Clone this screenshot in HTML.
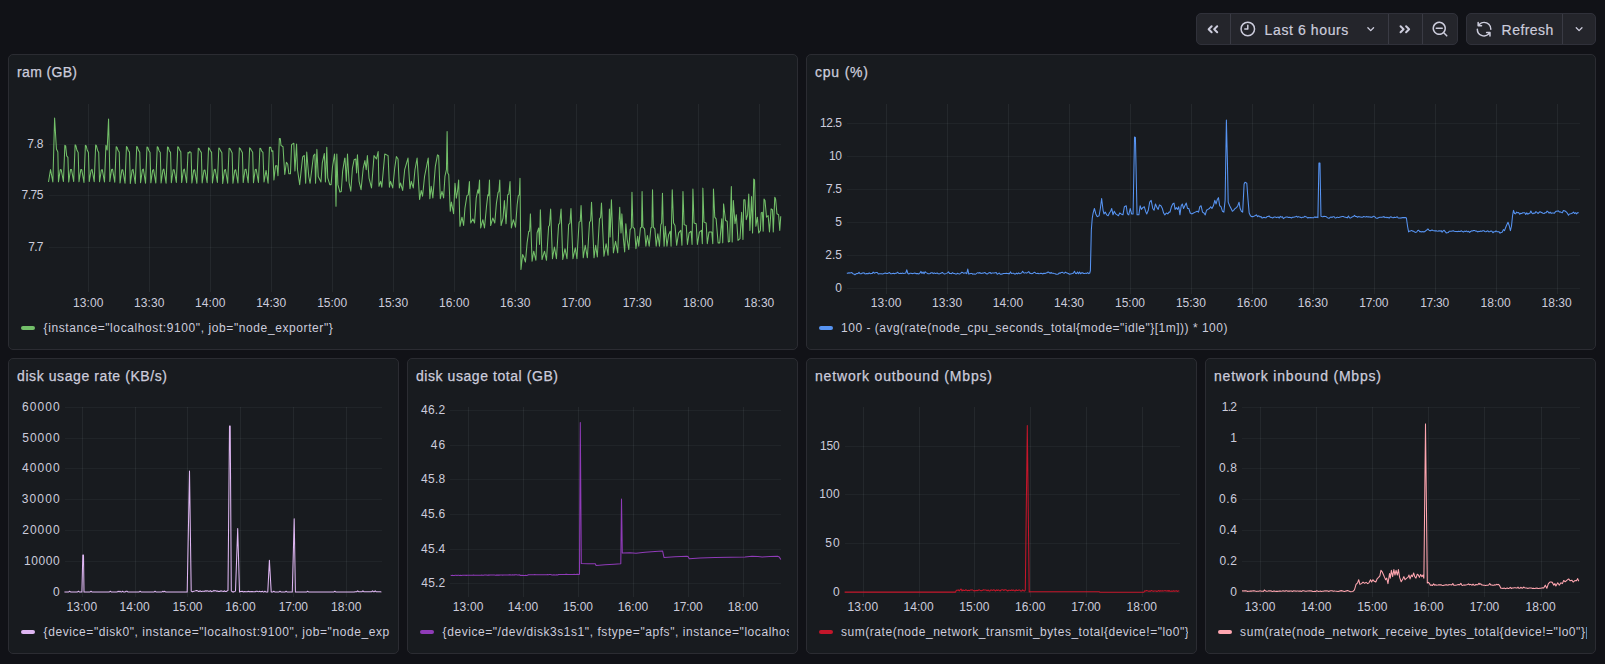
<!DOCTYPE html>
<html><head><meta charset="utf-8"><title>Dashboard</title>
<style>
html,body{margin:0;padding:0;background:#111217;}
body{width:1605px;height:664px;overflow:hidden;position:relative;font-family:"Liberation Sans",sans-serif;color:#ccccdc;}
.panel{position:absolute;box-sizing:border-box;background:#181b1f;border:1px solid #2b2c32;border-radius:5px;overflow:hidden;}
.panel svg{position:absolute;left:-1px;top:-1px;display:block;}
svg text{font-family:"Liberation Sans",sans-serif;}
.ttl{stroke:#ccccdc;stroke-width:0.25px;}
.grp{position:absolute;top:13px;height:32px;box-sizing:border-box;background:#24252b;border:1px solid #30313a;border-radius:5px;overflow:hidden;}
.grp .btn{position:absolute;top:0;height:30px;box-sizing:border-box;}
.grp .sep{border-left:1px solid #34373d;}
.grp svg{position:absolute;left:0;top:0;}
.lbl{stroke:#ccccdc;stroke-width:0.2px;}

</style></head><body>
<div class="grp" style="left:1196px;width:262px">
<svg width="262" height="32" viewBox="1196 13 262 32" style="left:-1px;top:-1px">
<path d="M1230.5 13V45M1388.5 13V45M1422.5 13V45" stroke="#3a3b44" stroke-width="1" fill="none"/>
<g fill="#ccccdc">
<path transform="translate(1200.9,17.2) scale(1)" d="M11.46,8.29a1,1,0,0,0-1.42,0l-3,3a1,1,0,0,0,0,1.42l3,3a1,1,0,0,0,1.42,0,1,1,0,0,0,0-1.42L9.16,12l2.3-2.29A1,1,0,0,0,11.46,8.29ZM14.66,12,17,9.71a1,1,0,0,0-1.42-1.42l-3,3a1,1,0,0,0,0,1.42l3,3a1,1,0,0,0,1.42,0,1,1,0,0,0,0-1.42Z"/>
<path transform="translate(1238.8,19.9) scale(0.75)" d="M12,2A10,10,0,1,0,22,12,10.01114,10.01114,0,0,0,12,2Zm0,18a8,8,0,1,1,8-8A8.00917,8.00917,0,0,1,12,20ZM12,6a.99974.99974,0,0,0-1,1v4H8a1,1,0,0,0,0,2h4a.99974.99974,0,0,0,1-1V7A.99974.99974,0,0,0,12,6Z"/>
<path transform="translate(1362.7,21.2) scale(0.6667)" d="M17,9.17a1,1,0,0,0-1.41,0L12,12.71,8.46,9.17a1,1,0,0,0-1.41,0,1,1,0,0,0,0,1.42l4.24,4.24a1,1,0,0,0,1.42,0L17,10.59A1,1,0,0,0,17,9.17Z"/>
<path transform="translate(1416.85,17.2) scale(-1,1)" d="M11.46,8.29a1,1,0,0,0-1.42,0l-3,3a1,1,0,0,0,0,1.42l3,3a1,1,0,0,0,1.42,0,1,1,0,0,0,0-1.42L9.16,12l2.3-2.29A1,1,0,0,0,11.46,8.29ZM14.66,12,17,9.71a1,1,0,0,0-1.42-1.42l-3,3a1,1,0,0,0,0,1.42l3,3a1,1,0,0,0,1.42,0,1,1,0,0,0,0-1.42Z"/>
<path transform="translate(1431.0,20.1) scale(0.75)" d="M21.71,20.29,18,16.61A9,9,0,1,0,16.61,18l3.68,3.68a1,1,0,0,0,1.42,0A1,1,0,0,0,21.71,20.29ZM11,18a7,7,0,1,1,7-7A7,7,0,0,1,11,18ZM15,10H7a1,1,0,0,0,0,2h8a1,1,0,0,0,0-2Z"/>
</g>
<text class="lbl" x="1264.6" y="34.8" font-size="14" fill="#ccccdc" textLength="83.7" lengthAdjust="spacing">Last 6 hours</text>
</svg></div>
<div class="grp" style="left:1466px;width:130px">
<svg width="130" height="32" viewBox="1466 13 130 32" style="left:-1px;top:-1px">
<path d="M1562.5 13V45" stroke="#3a3b44" stroke-width="1" fill="none"/>
<g fill="#ccccdc">
<path transform="translate(1475.07,20.14) scale(0.75)" d="M19.91,15.51H15.38a1,1,0,0,0,0,2h2.4A8,8,0,0,1,4,12a1,1,0,0,0-2,0,10,10,0,0,0,16.88,7.23V21a1,1,0,0,0,2,0V16.5A1,1,0,0,0,19.91,15.51ZM12,2A10,10,0,0,0,5.12,4.77V3a1,1,0,0,0-2,0V7.5a1,1,0,0,0,1,1h4.5a1,1,0,0,0,0-2H6.22A8,8,0,0,1,20,12a1,1,0,0,0,2,0A10,10,0,0,0,12,2Z"/>
<path transform="translate(1571.1,21.2) scale(0.6667)" d="M17,9.17a1,1,0,0,0-1.41,0L12,12.71,8.46,9.17a1,1,0,0,0-1.41,0,1,1,0,0,0,0,1.42l4.24,4.24a1,1,0,0,0,1.42,0L17,10.59A1,1,0,0,0,17,9.17Z"/>
</g>
<text class="lbl" x="1501.6" y="34.8" font-size="14" fill="#ccccdc" textLength="51.7" lengthAdjust="spacing">Refresh</text>
</svg></div>

<div class="panel" style="left:8px;top:54px;width:790px;height:296px">
<svg width="790" height="296" viewBox="8 54 790 296">
<path d="M88.5 103.5V291.5M149.5 103.5V291.5M210.5 103.5V291.5M271.5 103.5V291.5M332.5 103.5V291.5M393.5 103.5V291.5M454.5 103.5V291.5M515.5 103.5V291.5M576.5 103.5V291.5M637.5 103.5V291.5M698.5 103.5V291.5M759.5 103.5V291.5" stroke="rgba(240,250,255,0.058)" stroke-width="1" fill="none" shape-rendering="crispEdges"/>
<path d="M48.5 144.5H781.0M48.5 195.5H781.0M48.5 247.5H781.0" stroke="rgba(240,250,255,0.044)" stroke-width="1" fill="none" shape-rendering="crispEdges"/>
<text x="43.5" y="147.9" text-anchor="end" font-size="12" fill="#ccccdc" textLength="16.3" lengthAdjust="spacing">7.8</text>
<text x="43.5" y="199.0" text-anchor="end" font-size="12" fill="#ccccdc" textLength="22.1" lengthAdjust="spacing">7.75</text>
<text x="43.5" y="250.9" text-anchor="end" font-size="12" fill="#ccccdc" textLength="15.2" lengthAdjust="spacing">7.7</text>
<text x="88.2" y="306.7" text-anchor="middle" font-size="12" fill="#ccccdc" textLength="30.6" lengthAdjust="spacing">13:00</text>
<text x="149.2" y="306.7" text-anchor="middle" font-size="12" fill="#ccccdc" textLength="30.4" lengthAdjust="spacing">13:30</text>
<text x="210.2" y="306.7" text-anchor="middle" font-size="12" fill="#ccccdc" textLength="30.3" lengthAdjust="spacing">14:00</text>
<text x="271.2" y="306.7" text-anchor="middle" font-size="12" fill="#ccccdc" textLength="30.1" lengthAdjust="spacing">14:30</text>
<text x="332.2" y="306.7" text-anchor="middle" font-size="12" fill="#ccccdc" textLength="30.1" lengthAdjust="spacing">15:00</text>
<text x="393.2" y="306.7" text-anchor="middle" font-size="12" fill="#ccccdc" textLength="29.9" lengthAdjust="spacing">15:30</text>
<text x="454.2" y="306.7" text-anchor="middle" font-size="12" fill="#ccccdc" textLength="30.5" lengthAdjust="spacing">16:00</text>
<text x="515.2" y="306.7" text-anchor="middle" font-size="12" fill="#ccccdc" textLength="30.3" lengthAdjust="spacing">16:30</text>
<text x="576.2" y="306.7" text-anchor="middle" font-size="12" fill="#ccccdc" textLength="29.3" lengthAdjust="spacing">17:00</text>
<text x="637.2" y="306.7" text-anchor="middle" font-size="12" fill="#ccccdc" textLength="29.1" lengthAdjust="spacing">17:30</text>
<text x="698.2" y="306.7" text-anchor="middle" font-size="12" fill="#ccccdc" textLength="30.4" lengthAdjust="spacing">18:00</text>
<text x="759.2" y="306.7" text-anchor="middle" font-size="12" fill="#ccccdc" textLength="30.2" lengthAdjust="spacing">18:30</text>
<text x="17.0" y="77.0" text-anchor="start" font-size="14" fill="#ccccdc" textLength="60.0" lengthAdjust="spacing" class="ttl">ram (GB)</text>
<rect x="21" y="326.0" width="14" height="4" rx="2" fill="#73BF69"/>
<text x="43.6" y="332.2" text-anchor="start" font-size="12" fill="#ccccdc" textLength="289.2" lengthAdjust="spacing">{instance=&quot;localhost:9100&quot;, job=&quot;node_exporter&quot;}</text>
<path d="M48.50 182.00L50.53 169.50L52.87 182.00L54.60 118.00L56.43 149.00L57.85 152.00L58.46 181.82L60.29 169.55L61.20 169.65L63.44 181.57L64.86 145.34L65.68 145.90L66.69 155.97L67.91 157.36L68.72 182.01L70.55 169.44L71.47 169.43L73.70 181.57L75.13 144.89L75.94 145.90L76.96 150.32L78.18 152.43L78.99 181.62L80.82 169.62L81.73 169.63L83.97 182.45L85.39 145.38L86.21 145.90L87.22 150.30L88.44 152.58L89.25 181.55L91.08 170.26L92.00 169.29L94.23 181.64L95.66 144.92L96.47 145.90L97.49 150.21L98.71 152.42L99.52 181.68L101.35 169.98L102.26 169.64L104.50 181.87L105.92 145.35L107.14 150.00L108.56 119.00L109.78 172.00L109.78 181.56L111.61 169.46L112.52 169.21L114.76 182.18L116.18 146.73L117.00 147.40L118.01 150.21L119.23 152.19L120.04 182.95L121.87 169.70L122.79 169.79L125.03 183.20L126.45 146.54L127.26 147.40L128.28 150.47L129.50 152.13L130.31 183.38L132.14 170.13L133.05 169.29L135.29 183.48L136.71 146.42L137.53 147.40L138.54 150.32L139.76 152.36L140.57 182.65L142.40 169.89L143.32 169.04L145.55 183.17L146.98 147.06L147.79 147.40L148.81 150.47L150.03 152.48L150.84 182.81L152.67 170.10L153.58 169.59L155.82 183.08L157.24 146.76L158.05 147.40L159.07 150.74L160.29 152.54L161.10 182.97L162.93 170.06L163.85 169.06L166.08 183.20L167.50 146.95L168.32 147.40L169.33 150.89L170.55 152.42L171.36 182.78L173.19 169.79L174.11 169.67L176.35 182.52L177.77 146.76L178.58 147.40L179.60 150.07L180.82 151.72L181.63 182.56L183.46 170.17L184.37 169.13L186.61 182.75L188.03 152.39L188.85 153.10L189.86 151.67L191.08 152.58L191.89 182.95L193.72 169.95L194.64 169.88L196.87 183.32L198.30 148.36L199.11 148.60L200.13 150.78L201.35 152.62L202.16 182.86L203.99 170.28L204.90 169.96L207.14 182.65L208.56 147.68L209.37 148.60L210.39 150.73L211.61 152.43L212.42 182.98L214.25 169.99L215.17 169.26L217.40 182.50L218.83 147.92L219.64 148.60L220.66 150.87L221.88 152.77L222.68 183.45L224.51 170.09L225.43 169.52L227.67 183.12L229.09 148.18L229.90 148.60L230.92 150.55L232.14 153.10L232.95 183.28L234.78 170.27L235.69 169.80L237.93 182.89L239.35 147.90L240.17 148.60L241.18 150.60L242.40 152.83L243.21 182.56L245.04 169.47L245.96 169.21L248.19 182.66L249.62 147.84L250.43 148.60L251.45 150.55L252.67 152.20L253.48 182.65L255.31 169.50L256.22 169.36L258.46 182.53L259.88 148.37L260.70 148.60L261.71 151.11L262.93 152.35L264.03 181.93L266.07 170.41L268.10 183.28L269.45 147.36L270.81 147.36L271.76 151.43L272.84 150.75L273.93 179.89L275.55 165.66L276.91 165.66L277.99 175.83L279.35 138.55L280.30 138.55L280.98 145.33L283.01 146.69L284.77 174.47L286.40 162.27L287.75 164.31L288.84 173.79L290.46 173.79L291.55 144.65L293.85 143.30L294.94 171.08L296.56 143.98L297.51 169.73L299.68 184.64L302.66 156.85L304.29 155.50L305.64 183.28L306.73 152.11L308.76 176.50L310.12 183.28L313.50 155.50L314.86 154.14L315.54 183.28L316.89 149.40L318.25 176.50L319.60 179.22L320.96 181.93L322.31 162.95L324.35 153.46L325.43 181.93L326.79 147.36L327.74 177.86L329.77 184.64L331.12 184.64L332.48 167.02L334.51 154.14L335.19 164.31L336.00 206.32L336.82 154.14L337.90 184.64L339.93 192.09L341.29 191.41L342.65 171.08L344.68 158.21L345.00 158.12L346.33 181.33L347.49 153.98L349.14 182.99L350.80 191.27L352.46 168.07L354.12 159.78L355.77 158.95L356.60 173.04L357.43 154.81L359.09 181.33L361.08 189.62L363.23 168.07L364.89 160.61L366.22 169.73L367.38 155.64L369.03 178.01L371.52 187.96L374.01 155.64L376.49 158.95L378.15 151.49L378.98 186.30L380.64 181.33L381.80 187.13L384.78 153.98L388.10 155.64L389.42 187.13L390.58 181.33L392.74 187.96L394.73 168.07L396.38 156.47L398.04 158.95L399.37 187.96L400.53 182.99L402.68 190.45L404.67 169.73L407.99 158.12L409.98 188.79L411.30 181.33L413.29 187.96L414.95 169.73L417.10 158.12L419.59 199.56L421.25 190.45L422.57 196.25L424.56 176.36L426.22 168.07L428.21 158.12L429.87 198.73L431.19 186.30L432.85 197.90L435.34 166.41L437.49 154.81L438.65 155.64L440.31 198.73L441.97 191.27L443.62 197.90L444.95 176.36L446.44 169.73L447.11 131.60L447.77 173.04L448.76 174.70L450.25 211.17L451.41 202.05L453.57 213.65L455.00 183.23L456.33 198.15L457.49 191.52L458.65 179.92L459.97 226.33L461.96 217.21L463.62 225.50L464.95 208.10L466.93 195.66L468.26 194.84L469.42 181.58L470.75 223.01L472.90 218.87L474.56 223.01L476.22 198.15L477.87 189.86L478.54 193.18L479.53 179.92L480.69 227.99L482.85 219.70L484.50 227.99L486.49 206.44L487.82 194.84L488.65 195.66L489.48 179.92L490.64 225.50L492.79 218.04L494.78 223.01L496.44 203.12L498.10 192.35L498.93 191.52L499.75 179.92L501.08 225.50L503.07 218.04L504.39 200.64L506.05 223.84L507.71 194.84L508.87 194.01L510.03 181.58L511.36 227.99L513.35 219.70L515.50 227.16L517.16 204.78L518.32 195.66L519.31 194.84L519.98 178.26L520.97 269.43L522.63 254.51L523.79 256.99L525.45 261.97L527.10 242.90L528.76 231.30L529.59 231.30L530.42 213.90L532.08 261.14L533.73 251.19L535.89 260.31L537.05 232.96L538.71 227.99L539.54 244.56L540.36 209.75L542.02 259.48L544.51 251.19L546.50 260.31L548.65 226.33L549.48 225.50L550.64 208.93L552.46 258.65L554.45 247.05L556.44 258.65L558.60 224.67L559.76 223.01L561.08 208.93L562.74 259.48L565.00 248.71L566.99 258.65L568.65 224.67L569.97 223.01L570.97 208.43L572.96 258.65L575.28 247.88L576.93 258.65L579.09 222.19L580.25 221.36L581.08 205.61L583.23 257.82L585.22 245.39L587.38 257.82L589.53 222.19L590.69 220.53L591.52 202.29L594.01 257.82L595.66 245.39L597.32 256.99L599.48 218.87L600.64 217.21L601.47 203.12L603.95 256.17L606.11 243.73L608.10 255.34L609.42 208.93L610.09 237.10L611.41 199.81L613.40 252.85L615.56 241.25L617.71 252.85L619.70 207.27L621.03 232.96L621.85 213.90L623.35 237.93L624.67 252.02L625.83 223.84L627.16 239.59L628.82 249.54L630.14 229.64L631.30 227.99L631.97 192.35L632.96 227.16L634.62 228.82L635.94 248.71L637.60 236.27L638.76 246.22L640.42 227.99L641.58 227.16L642.08 191.52L642.90 227.16L644.56 228.82L645.89 246.22L647.38 235.45L649.20 246.22L650.86 227.99L651.86 227.16L652.52 189.86L653.35 227.16L654.84 228.82L656.17 246.22L657.82 233.79L659.48 246.22L660.81 224.67L661.64 223.01L662.46 193.18L663.29 227.99L664.12 246.22L665.28 226.33L666.94 246.22L668.60 234.62L670.25 231.30L671.08 246.22L672.24 189.86L673.57 223.01L675.00 225.45L676.66 245.34L678.65 232.90L680.80 230.42L681.96 245.34L682.96 191.47L684.12 224.62L686.27 225.45L687.43 244.51L689.09 232.90L691.08 231.25L692.07 244.51L692.90 188.98L694.06 222.96L696.22 223.79L697.38 244.51L699.37 232.08L701.52 230.42L702.35 243.68L702.85 188.15L704.01 222.13L706.16 222.96L707.32 243.68L708.98 232.08L711.80 232.08L712.79 243.68L713.46 188.98L714.78 217.16L716.11 218.82L718.10 242.85L719.75 242.85L721.74 218.82L722.74 242.85L723.57 203.90L725.56 220.47L727.21 221.30L728.37 242.02L729.70 241.19L731.36 186.49L732.19 242.02L733.35 200.58L735.00 223.79L736.33 214.67L737.99 240.36L739.98 238.71L741.63 212.19L742.96 239.54L743.79 199.75L744.95 199.75L746.27 219.64L747.60 214.67L748.76 193.95L749.92 230.42L751.58 196.44L752.57 232.90L753.73 179.03L754.56 179.86L755.89 226.27L757.38 217.16L758.71 232.90L760.36 230.42L761.19 213.01L762.35 212.19L763.18 231.25L764.01 198.93L765.00 200.58L766.50 217.16L768.15 215.50L769.48 232.08L771.14 208.87L772.46 209.70L773.29 232.08L774.78 197.27L775.61 198.93L776.94 213.84L778.60 214.67L779.76 230.42L780.75 216.33" stroke="#73BF69" stroke-width="1.05" fill="none" stroke-linejoin="round"/>
</svg></div>
<div class="panel" style="left:806px;top:54px;width:790px;height:296px">
<svg width="790" height="296" viewBox="806 54 790 296">
<path d="M886.5 103.5V293.5M947.5 103.5V293.5M1008.5 103.5V293.5M1069.5 103.5V293.5M1130.5 103.5V293.5M1191.5 103.5V293.5M1252.5 103.5V293.5M1313.5 103.5V293.5M1374.5 103.5V293.5M1435.5 103.5V293.5M1496.5 103.5V293.5M1557.5 103.5V293.5" stroke="rgba(240,250,255,0.058)" stroke-width="1" fill="none" shape-rendering="crispEdges"/>
<path d="M847.0 123.5H1579.5M847.0 156.5H1579.5M847.0 189.5H1579.5M847.0 222.5H1579.5M847.0 255.5H1579.5M847.0 288.5H1579.5" stroke="rgba(240,250,255,0.044)" stroke-width="1" fill="none" shape-rendering="crispEdges"/>
<text x="842.0" y="126.8" text-anchor="end" font-size="12" fill="#ccccdc" textLength="22.1" lengthAdjust="spacing">12.5</text>
<text x="842.0" y="159.8" text-anchor="end" font-size="12" fill="#ccccdc" textLength="12.9" lengthAdjust="spacing">10</text>
<text x="842.0" y="192.9" text-anchor="end" font-size="12" fill="#ccccdc" textLength="16.0" lengthAdjust="spacing">7.5</text>
<text x="842.0" y="225.9" text-anchor="end" font-size="12" fill="#ccccdc" textLength="6.9" lengthAdjust="spacing">5</text>
<text x="842.0" y="258.9" text-anchor="end" font-size="12" fill="#ccccdc" textLength="16.8" lengthAdjust="spacing">2.5</text>
<text x="842.0" y="291.9" text-anchor="end" font-size="12" fill="#ccccdc" textLength="7.6" lengthAdjust="spacing">0</text>
<text x="886.1" y="306.7" text-anchor="middle" font-size="12" fill="#ccccdc" textLength="30.6" lengthAdjust="spacing">13:00</text>
<text x="947.1" y="306.7" text-anchor="middle" font-size="12" fill="#ccccdc" textLength="30.4" lengthAdjust="spacing">13:30</text>
<text x="1008.0" y="306.7" text-anchor="middle" font-size="12" fill="#ccccdc" textLength="30.3" lengthAdjust="spacing">14:00</text>
<text x="1069.0" y="306.7" text-anchor="middle" font-size="12" fill="#ccccdc" textLength="30.1" lengthAdjust="spacing">14:30</text>
<text x="1130.0" y="306.7" text-anchor="middle" font-size="12" fill="#ccccdc" textLength="30.1" lengthAdjust="spacing">15:00</text>
<text x="1190.9" y="306.7" text-anchor="middle" font-size="12" fill="#ccccdc" textLength="29.9" lengthAdjust="spacing">15:30</text>
<text x="1251.9" y="306.7" text-anchor="middle" font-size="12" fill="#ccccdc" textLength="30.5" lengthAdjust="spacing">16:00</text>
<text x="1312.8" y="306.7" text-anchor="middle" font-size="12" fill="#ccccdc" textLength="30.3" lengthAdjust="spacing">16:30</text>
<text x="1373.8" y="306.7" text-anchor="middle" font-size="12" fill="#ccccdc" textLength="29.3" lengthAdjust="spacing">17:00</text>
<text x="1434.7" y="306.7" text-anchor="middle" font-size="12" fill="#ccccdc" textLength="29.1" lengthAdjust="spacing">17:30</text>
<text x="1495.6" y="306.7" text-anchor="middle" font-size="12" fill="#ccccdc" textLength="30.4" lengthAdjust="spacing">18:00</text>
<text x="1556.6" y="306.7" text-anchor="middle" font-size="12" fill="#ccccdc" textLength="30.2" lengthAdjust="spacing">18:30</text>
<text x="815.0" y="77.0" text-anchor="start" font-size="14" fill="#ccccdc" textLength="53.0" lengthAdjust="spacing" class="ttl">cpu (%)</text>
<rect x="819" y="326.0" width="14" height="4" rx="2" fill="#5794F2"/>
<text x="841.1" y="332.2" text-anchor="start" font-size="12" fill="#ccccdc" textLength="386.3" lengthAdjust="spacing">100 - (avg(rate(node_cpu_seconds_total{mode=&quot;idle&quot;}[1m])) * 100)</text>
<path d="M846.80 272.85L847.82 273.35L848.83 272.78L849.85 273.12L850.87 272.74L851.88 272.56L852.90 273.75L853.92 273.98L854.93 274.79L855.95 273.83L856.96 273.61L857.98 273.55L859.00 272.27L860.01 273.78L861.03 273.85L862.05 273.13L863.06 273.03L864.08 272.83L865.10 274.03L866.11 273.63L867.13 273.54L868.15 273.82L869.16 272.86L870.18 273.70L871.20 273.53L872.21 273.44L873.23 272.18L874.25 273.15L875.26 272.76L876.28 272.58L877.29 272.50L878.31 274.05L879.33 273.66L880.34 273.71L881.36 273.78L882.38 274.07L883.39 273.64L884.41 273.26L885.43 273.07L886.44 273.42L887.46 273.53L888.48 273.09L889.49 272.58L890.51 273.62L891.53 273.80L892.54 273.54L893.56 273.28L894.58 273.68L895.59 273.22L896.61 273.16L897.62 272.22L898.64 273.26L899.66 273.53L900.67 273.24L901.69 273.48L902.71 273.12L903.72 273.57L904.74 273.36L905.76 273.01L906.77 269.80L907.79 273.27L908.81 274.05L909.82 273.35L910.84 273.17L911.86 273.60L912.87 273.62L913.89 273.21L914.91 273.08L915.92 273.63L916.94 273.53L917.95 273.64L918.97 273.88L919.99 272.98L921.00 271.40L922.02 273.41L923.04 271.93L924.05 273.77L925.07 271.70L926.09 272.59L927.10 273.16L928.12 273.81L929.14 273.82L930.15 273.51L931.17 272.74L932.19 272.73L933.20 273.68L934.22 272.82L935.24 273.56L936.25 273.15L937.27 272.99L938.28 273.80L939.30 273.87L940.32 273.53L941.33 273.01L942.35 272.44L943.37 273.33L944.38 273.97L945.40 273.74L946.42 273.37L947.43 272.89L948.45 271.80L949.47 273.38L950.48 273.47L951.50 273.69L952.52 272.63L953.53 273.43L954.55 273.56L955.57 273.92L956.58 273.93L957.60 273.31L958.61 273.71L959.63 273.92L960.65 273.34L961.66 272.31L962.68 272.62L963.70 273.20L964.71 272.95L965.73 272.85L966.75 273.67L967.76 269.00L968.78 274.10L969.80 273.86L970.81 273.61L971.83 273.40L972.85 274.24L973.86 273.87L974.88 274.19L975.90 273.90L976.91 273.14L977.93 272.62L978.94 273.25L979.96 272.50L980.98 273.51L981.99 273.17L983.01 273.13L984.03 272.78L985.04 272.52L986.06 273.54L987.08 274.11L988.09 273.39L989.11 272.70L990.13 272.42L991.14 273.59L992.16 272.92L993.18 273.03L994.19 273.01L995.21 272.79L996.23 272.60L997.24 274.31L998.26 273.61L999.27 273.06L1000.29 274.16L1001.31 274.12L1002.32 273.93L1003.34 273.50L1004.36 273.45L1005.37 273.51L1006.39 273.18L1007.41 273.47L1008.42 273.63L1009.44 273.86L1010.46 271.90L1011.47 273.42L1012.49 273.35L1013.51 273.20L1014.52 274.02L1015.54 273.97L1016.56 273.15L1017.57 273.84L1018.59 272.78L1019.60 273.69L1020.62 273.41L1021.64 272.88L1022.65 271.30L1023.67 272.82L1024.69 273.12L1025.70 272.60L1026.72 273.12L1027.74 272.32L1028.75 271.60L1029.77 273.23L1030.79 273.37L1031.80 273.80L1032.82 273.26L1033.84 272.59L1034.85 272.38L1035.87 273.29L1036.89 273.40L1037.90 273.21L1038.92 273.70L1039.93 273.49L1040.95 273.21L1041.97 273.50L1042.98 273.96L1044.00 273.15L1045.02 273.59L1046.03 273.04L1047.05 272.78L1048.07 271.90L1049.08 272.46L1050.10 273.38L1051.12 272.49L1052.13 273.32L1053.15 273.22L1054.17 273.55L1055.18 273.71L1056.20 274.22L1057.22 274.21L1058.23 274.05L1059.25 272.90L1060.26 273.23L1061.28 272.43L1062.30 272.25L1063.31 272.91L1064.33 273.27L1065.35 272.11L1066.36 272.86L1067.38 273.13L1068.40 273.54L1069.41 274.28L1070.43 273.89L1071.45 273.68L1072.46 273.55L1073.48 273.06L1074.50 271.18L1075.51 273.38L1076.53 273.60L1077.55 272.00L1078.56 273.70L1079.58 272.07L1080.59 273.77L1081.61 272.88L1082.63 272.69L1083.64 273.46L1084.66 273.54L1085.68 273.13L1086.69 273.44L1087.71 272.60L1088.73 273.59L1089.74 273.00L1090.40 270.50L1091.33 230.01L1092.23 218.44L1093.13 213.02L1094.40 208.50L1095.84 213.92L1097.29 216.63L1099.10 215.73L1100.36 208.50L1101.63 198.56L1103.07 210.31L1103.98 213.92L1105.24 212.11L1106.69 214.83L1108.13 215.73L1109.40 213.02L1110.66 211.21L1111.75 208.50L1113.01 214.83L1114.28 211.21L1115.72 213.92L1117.17 214.83L1118.44 215.73L1119.70 213.02L1121.15 213.92L1122.95 214.83L1124.40 206.69L1126.21 205.79L1127.47 213.92L1128.74 214.83L1130.18 208.50L1131.63 213.92L1133.08 213.92L1134.52 137.11L1135.42 137.47L1137.05 214.83L1138.86 214.83L1140.12 205.79L1141.39 209.40L1142.83 207.60L1144.28 206.69L1145.55 211.21L1146.81 213.92L1148.26 210.31L1149.70 202.17L1151.15 200.37L1152.78 208.50L1154.04 210.31L1155.49 203.98L1156.93 207.60L1158.20 209.40L1159.46 204.89L1160.91 205.79L1162.35 208.50L1163.62 213.02L1164.88 214.83L1166.33 213.02L1167.78 213.92L1169.04 212.11L1170.00 212.11L1171.45 206.69L1172.71 203.98L1173.98 203.08L1175.06 209.40L1176.33 207.60L1177.59 209.40L1178.68 206.69L1179.94 214.83L1181.21 205.79L1182.29 203.98L1183.56 208.50L1184.82 205.79L1186.27 203.08L1187.53 208.50L1188.80 208.50L1190.24 213.02L1191.69 213.92L1193.50 213.02L1195.30 212.11L1197.11 211.21L1198.56 212.11L1199.82 206.69L1201.09 205.79L1202.53 212.11L1203.98 213.02L1205.24 214.83L1206.51 210.31L1207.95 209.40L1209.40 208.50L1210.67 206.69L1211.93 208.50L1213.38 205.79L1214.82 200.37L1216.09 203.98L1217.35 199.46L1218.44 197.66L1219.70 205.79L1220.97 206.69L1222.41 211.21L1223.86 212.11L1225.12 200.37L1226.39 119.94L1227.47 164.22L1228.20 202.17L1229.64 205.79L1231.09 208.50L1232.35 211.21L1233.62 210.31L1235.06 208.50L1236.51 207.60L1237.78 205.79L1239.04 202.17L1240.12 208.50L1241.39 211.21L1242.65 212.11L1244.10 184.10L1245.00 182.29L1246.81 183.20L1248.08 200.37L1249.16 213.02L1250.43 215.73L1251.69 216.63L1253.14 216.63L1254.94 215.73L1256.39 214.83L1257.66 216.63L1258.92 215.73L1260.01 216.99L1261.00 216.43L1262.02 218.10L1263.03 217.65L1264.05 217.19L1265.07 217.67L1266.08 217.71L1267.10 216.56L1268.12 216.43L1269.13 215.93L1270.15 217.25L1271.16 217.38L1272.18 217.88L1273.20 217.68L1274.21 217.02L1275.23 216.93L1276.25 217.62L1277.26 217.28L1278.28 217.01L1279.30 218.05L1280.31 216.38L1281.33 217.17L1282.35 216.83L1283.36 218.59L1284.38 217.86L1285.40 217.16L1286.41 216.91L1287.43 216.95L1288.45 217.53L1289.46 217.32L1290.48 217.58L1291.49 217.96L1292.51 217.29L1293.53 217.34L1294.54 217.06L1295.56 216.80L1296.58 216.33L1297.59 217.20L1298.61 216.63L1299.63 217.11L1300.64 217.38L1301.66 217.74L1302.68 217.16L1303.69 217.28L1304.71 216.31L1305.73 216.77L1306.74 217.07L1307.76 218.03L1308.78 217.43L1309.79 217.74L1310.81 217.47L1311.82 217.69L1312.84 217.70L1313.86 217.71L1314.87 216.79L1315.89 217.55L1316.91 216.98L1317.92 217.61L1318.94 162.90L1319.96 162.90L1320.97 216.31L1321.99 216.61L1323.01 216.73L1324.02 216.33L1325.04 216.49L1326.06 216.56L1327.07 217.37L1328.09 217.98L1329.11 218.33L1330.12 217.29L1331.14 217.09L1332.15 217.44L1333.17 216.68L1334.19 216.73L1335.20 218.05L1336.22 217.70L1337.24 217.12L1338.25 217.48L1339.27 217.37L1340.29 217.04L1341.30 216.77L1342.32 216.54L1343.34 216.55L1344.35 217.00L1345.37 217.18L1346.39 217.47L1347.40 217.85L1348.42 215.94L1349.44 217.79L1350.45 218.09L1351.47 217.38L1352.48 216.73L1353.50 216.48L1354.52 215.30L1355.53 216.58L1356.55 216.51L1357.57 217.21L1358.58 216.60L1359.60 216.86L1360.62 216.99L1361.63 217.27L1362.65 217.15L1363.67 216.51L1364.68 216.77L1365.70 216.92L1366.72 216.59L1367.73 216.95L1368.75 216.73L1369.77 216.95L1370.78 217.12L1371.80 217.35L1372.81 216.75L1373.83 216.16L1374.85 216.93L1375.86 217.91L1376.88 218.20L1377.90 218.12L1378.91 217.58L1379.93 217.35L1380.95 217.18L1381.96 217.35L1382.98 216.89L1384.00 216.63L1385.01 217.61L1386.03 217.11L1387.05 217.72L1388.06 217.33L1389.08 218.19L1390.10 217.10L1391.11 216.82L1392.13 217.49L1393.14 217.65L1394.16 217.37L1395.18 217.39L1396.19 217.16L1397.21 216.77L1398.23 218.02L1399.24 218.04L1400.26 218.11L1401.28 217.88L1402.29 217.64L1403.31 217.48L1404.33 217.61L1405.34 217.49L1406.40 218.00L1407.60 226.50L1408.60 231.90L1409.60 231.05L1410.62 231.08L1411.63 230.42L1412.65 231.14L1413.67 231.32L1414.68 232.05L1415.70 232.39L1416.72 231.95L1417.73 230.54L1418.75 230.24L1419.76 231.72L1420.78 231.45L1421.80 231.92L1422.81 231.54L1423.83 232.05L1424.85 231.60L1425.86 230.67L1426.88 229.97L1427.90 228.96L1428.91 230.12L1429.93 230.67L1430.95 230.61L1431.96 229.92L1432.98 230.43L1434.00 230.77L1435.01 230.89L1436.03 230.71L1437.05 231.06L1438.06 231.28L1439.08 230.60L1440.09 231.29L1441.11 230.65L1442.13 232.18L1443.14 230.91L1444.16 230.31L1445.18 231.54L1446.19 232.88L1447.21 232.72L1448.23 232.57L1449.24 231.25L1450.26 231.19L1451.28 231.29L1452.29 230.99L1453.31 230.84L1454.33 231.21L1455.34 231.52L1456.36 231.59L1457.38 231.63L1458.39 231.22L1459.41 231.55L1460.42 231.37L1461.44 230.81L1462.46 231.55L1463.47 232.03L1464.49 231.12L1465.51 231.55L1466.52 230.92L1467.54 231.84L1468.56 231.30L1469.57 232.39L1470.59 231.52L1471.61 230.86L1472.62 231.07L1473.64 230.45L1474.66 230.53L1475.67 231.17L1476.69 231.02L1477.71 231.99L1478.72 231.36L1479.74 231.48L1480.75 230.94L1481.77 231.38L1482.79 230.75L1483.80 230.68L1484.82 231.47L1485.84 231.65L1486.85 231.21L1487.87 230.82L1488.89 231.85L1489.90 231.66L1490.92 231.00L1491.94 231.27L1492.95 232.77L1493.97 231.68L1494.99 231.85L1496.00 230.85L1497.02 231.66L1498.04 231.71L1499.05 231.82L1500.07 233.16L1501.08 232.48L1502.10 232.26L1503.50 229.60L1504.50 230.60L1505.50 228.00L1506.50 225.50L1508.00 222.20L1509.30 226.00L1510.40 230.60L1511.50 226.00L1512.50 216.00L1513.50 210.40L1514.60 213.50L1515.60 213.85L1516.62 212.12L1517.63 212.72L1518.65 212.59L1519.67 214.24L1520.68 213.36L1521.70 213.45L1522.72 212.82L1523.73 212.75L1524.75 212.77L1525.76 214.50L1526.78 212.83L1527.80 214.28L1528.81 213.40L1529.83 213.26L1530.85 210.97L1531.86 212.96L1532.88 213.80L1533.90 212.91L1534.91 213.17L1535.93 211.61L1536.95 212.36L1537.96 213.50L1538.98 212.53L1540.00 211.77L1541.01 212.28L1542.03 212.77L1543.05 213.30L1544.06 213.44L1545.08 212.80L1546.09 212.80L1547.11 211.15L1548.13 211.89L1549.14 213.07L1550.16 212.18L1551.18 213.36L1552.19 212.96L1553.21 212.97L1554.23 213.33L1555.24 211.98L1556.26 211.15L1557.28 211.24L1558.29 210.80L1559.31 211.94L1560.33 211.88L1561.34 212.47L1562.36 212.65L1563.38 210.54L1564.39 210.73L1565.41 211.26L1566.42 212.05L1567.44 213.36L1568.46 215.27L1569.47 213.99L1570.49 213.79L1571.51 213.48L1572.52 212.96L1573.54 212.12L1574.56 213.54L1575.57 212.70L1576.59 213.84L1577.61 212.67L1578.62 212.62" stroke="#5794F2" stroke-width="1.05" fill="none" stroke-linejoin="round"/>
</svg></div>
<div class="panel" style="left:8px;top:358px;width:391px;height:296px">
<svg width="391" height="296" viewBox="8 358 391 296">
<path d="M82.5 407.0V597.0M135.5 407.0V597.0M187.5 407.0V597.0M240.5 407.0V597.0M293.5 407.0V597.0M346.5 407.0V597.0" stroke="rgba(240,250,255,0.058)" stroke-width="1" fill="none" shape-rendering="crispEdges"/>
<path d="M64.6 407.5H382.0M64.6 438.5H382.0M64.6 468.5H382.0M64.6 499.5H382.0M64.6 530.5H382.0M64.6 561.5H382.0M64.6 592.5H382.0" stroke="rgba(240,250,255,0.044)" stroke-width="1" fill="none" shape-rendering="crispEdges"/>
<text x="59.6" y="410.9" text-anchor="end" font-size="12" fill="#ccccdc" textLength="37.7" lengthAdjust="spacing">60000</text>
<text x="59.6" y="441.7" text-anchor="end" font-size="12" fill="#ccccdc" textLength="37.3" lengthAdjust="spacing">50000</text>
<text x="59.6" y="472.4" text-anchor="end" font-size="12" fill="#ccccdc" textLength="37.5" lengthAdjust="spacing">40000</text>
<text x="59.6" y="503.2" text-anchor="end" font-size="12" fill="#ccccdc" textLength="37.8" lengthAdjust="spacing">30000</text>
<text x="59.6" y="534.0" text-anchor="end" font-size="12" fill="#ccccdc" textLength="37.3" lengthAdjust="spacing">20000</text>
<text x="59.6" y="564.7" text-anchor="end" font-size="12" fill="#ccccdc" textLength="35.7" lengthAdjust="spacing">10000</text>
<text x="59.6" y="595.5" text-anchor="end" font-size="12" fill="#ccccdc" textLength="7.6" lengthAdjust="spacing">0</text>
<text x="81.8" y="610.7" text-anchor="middle" font-size="12" fill="#ccccdc" textLength="30.6" lengthAdjust="spacing">13:00</text>
<text x="134.6" y="610.7" text-anchor="middle" font-size="12" fill="#ccccdc" textLength="30.3" lengthAdjust="spacing">14:00</text>
<text x="187.5" y="610.7" text-anchor="middle" font-size="12" fill="#ccccdc" textLength="30.1" lengthAdjust="spacing">15:00</text>
<text x="240.4" y="610.7" text-anchor="middle" font-size="12" fill="#ccccdc" textLength="30.5" lengthAdjust="spacing">16:00</text>
<text x="293.3" y="610.7" text-anchor="middle" font-size="12" fill="#ccccdc" textLength="29.3" lengthAdjust="spacing">17:00</text>
<text x="346.2" y="610.7" text-anchor="middle" font-size="12" fill="#ccccdc" textLength="30.4" lengthAdjust="spacing">18:00</text>
<text x="17.0" y="381.0" text-anchor="start" font-size="14" fill="#ccccdc" textLength="150.0" lengthAdjust="spacing" class="ttl">disk usage rate (KB/s)</text>
<rect x="21" y="630.0" width="14" height="4" rx="2" fill="#DEB6F2"/>
<clipPath id="c8358"><rect x="8" y="613" width="382.0" height="40"/></clipPath>
<text x="43.6" y="636.2" text-anchor="start" font-size="12" fill="#ccccdc" textLength="382.6" lengthAdjust="spacing" clip-path="url(#c8358)">{device=&quot;disk0&quot;, instance=&quot;localhost:9100&quot;, job=&quot;node_exporter&quot;}</text>
<path d="M64.40 591.90L65.28 591.90L66.15 591.90L67.03 591.90L67.91 591.90L68.78 591.90L69.66 591.30L70.54 591.90L71.42 591.90L72.29 591.90L73.17 591.90L74.05 591.90L74.92 591.90L75.80 591.90L76.68 591.90L77.55 591.90L78.43 591.30L79.31 591.90L80.19 591.90L81.90 591.90L82.80 555.00L83.50 555.00L84.00 591.90L84.88 591.90L85.75 591.90L86.63 591.90L87.51 591.90L88.38 591.90L89.26 591.90L90.14 591.90L91.02 591.30L91.89 591.90L92.77 591.90L93.65 591.90L94.52 591.90L95.40 591.90L96.28 591.90L97.15 591.90L98.03 591.90L98.91 591.90L99.79 591.90L100.66 591.90L101.54 591.90L102.42 591.90L103.29 591.90L104.17 591.90L105.05 591.90L105.92 591.90L106.80 591.90L107.68 591.90L108.56 591.90L109.43 591.90L110.31 591.30L111.19 591.90L112.06 591.90L112.94 591.90L113.82 591.90L114.69 591.90L115.57 591.90L116.45 591.90L117.33 591.90L118.20 591.30L119.08 591.90L119.96 591.30L120.83 591.90L121.71 591.90L122.59 591.30L123.46 591.90L124.34 591.90L125.22 591.90L126.10 591.30L126.97 591.30L127.85 591.90L128.73 591.90L129.60 591.90L130.48 591.90L131.36 591.90L132.23 591.90L133.11 591.90L133.99 591.90L134.87 591.90L135.74 591.90L136.62 591.90L137.50 591.90L138.37 591.90L139.25 591.90L140.13 591.30L141.00 591.90L141.88 591.90L142.76 591.90L143.64 591.90L144.51 591.90L145.39 591.90L146.27 591.90L147.14 591.90L148.02 591.90L148.90 591.90L149.78 591.90L150.65 591.90L151.53 591.90L152.41 591.90L153.28 591.90L154.16 591.90L155.04 591.30L155.91 591.90L156.79 591.90L157.67 591.90L158.55 591.90L159.42 591.90L160.30 591.90L161.18 591.90L162.05 591.90L162.93 591.30L163.81 591.90L164.68 591.30L165.56 591.90L166.44 591.90L167.32 591.90L168.19 591.90L169.07 591.90L169.95 591.90L170.82 591.90L171.70 591.90L172.58 591.90L173.45 591.90L174.33 591.90L175.21 591.90L176.09 591.90L176.96 591.90L177.84 591.90L178.72 591.90L179.59 591.90L180.47 591.90L181.35 591.90L182.22 591.90L183.10 591.90L183.98 591.90L184.86 591.90L185.73 591.90L187.20 591.90L189.50 471.00L191.20 591.10L192.08 591.68L192.95 591.64L193.83 591.18L194.71 591.00L195.59 590.77L196.46 590.42L197.34 590.68L198.22 591.39L199.09 591.51L199.97 590.81L200.85 591.40L201.72 591.38L202.60 591.27L203.48 591.23L204.36 591.36L205.23 590.81L206.11 591.29L206.99 590.69L207.86 590.98L208.74 591.38L209.62 591.27L210.49 590.71L211.37 591.62L212.25 591.21L213.13 591.11L214.00 590.32L214.88 591.07L215.76 590.65L216.63 591.24L217.51 590.95L218.39 591.44L219.26 591.21L220.14 591.42L221.02 590.79L221.90 591.20L222.77 591.33L223.65 591.46L224.53 590.79L225.40 591.48L226.28 591.52L228.00 590.40L229.50 426.00L230.20 426.00L231.30 590.90L232.18 591.68L233.05 591.88L233.93 591.87L235.50 591.10L237.70 528.50L239.50 591.90L240.38 591.56L241.25 591.57L242.13 591.32L243.01 591.79L243.89 591.86L244.76 591.53L245.64 591.68L246.52 591.70L247.39 591.71L248.27 591.32L249.15 591.75L250.02 591.61L250.90 591.67L251.78 591.49L252.66 591.64L253.53 591.74L254.41 591.65L255.29 591.70L256.16 591.22L257.04 591.31L257.92 591.51L258.79 591.66L259.67 591.35L260.55 591.68L261.43 591.64L262.30 591.30L263.18 591.90L264.06 591.90L264.93 591.30L265.81 591.90L266.69 591.90L267.80 591.90L269.40 560.30L271.20 591.90L272.08 591.90L272.95 591.90L273.83 591.30L274.71 591.90L275.59 591.90L276.46 591.90L277.34 591.90L278.22 591.90L279.09 591.90L279.97 591.30L280.85 591.90L281.72 591.90L282.60 591.90L283.48 591.90L284.36 591.90L285.23 591.90L286.11 591.30L286.99 591.90L287.86 591.90L288.74 591.90L289.62 591.90L290.49 591.90L291.37 591.90L292.30 591.90L294.20 518.80L295.40 591.90L296.28 591.90L297.15 591.90L298.03 591.90L298.91 591.90L299.79 591.90L300.66 591.90L301.54 591.90L302.42 591.90L303.29 591.90L304.17 591.90L305.05 591.90L305.92 591.90L306.80 591.90L307.68 591.30L308.56 591.90L309.43 591.90L310.31 591.90L311.19 591.90L312.06 591.90L312.94 591.90L313.82 591.90L314.69 591.90L315.57 591.90L316.45 591.90L317.33 591.90L318.20 591.90L319.08 591.90L319.96 591.90L320.83 591.90L321.71 591.90L322.59 591.90L323.46 591.90L324.34 591.90L325.22 591.90L326.10 591.90L326.97 591.90L327.85 591.90L328.73 591.90L329.60 591.90L330.48 591.90L331.36 591.90L332.23 591.90L333.11 591.90L333.99 591.90L334.87 591.30L335.74 591.90L336.62 591.90L337.50 591.90L338.37 591.90L339.25 591.90L340.13 591.90L341.00 591.90L341.88 591.90L342.76 591.90L343.64 591.90L344.51 591.90L345.39 591.90L346.27 591.90L347.14 591.90L348.02 591.90L348.90 591.90L349.77 591.90L350.65 591.90L351.53 591.90L352.41 591.90L353.28 591.90L354.16 591.90L355.04 591.70L355.91 591.70L356.79 591.70L357.67 590.80L358.54 591.70L359.42 591.70L360.30 591.70L361.18 591.70L362.05 591.70L362.93 590.80L363.81 591.70L364.68 591.70L365.56 591.70L366.44 591.70L367.31 591.70L368.19 591.70L369.07 591.70L369.95 591.70L370.82 591.70L371.70 591.70L372.58 590.80L373.45 591.70L374.33 591.70L375.21 590.80L376.08 591.70L376.96 591.70L377.84 591.70L378.72 591.70L379.59 591.70L380.47 591.70L381.35 591.90" stroke="#DEB6F2" stroke-width="1.05" fill="none" stroke-linejoin="round"/>
</svg></div>
<div class="panel" style="left:407px;top:358px;width:391px;height:296px">
<svg width="391" height="296" viewBox="407 358 391 296">
<path d="M468.5 407.0V597.0M523.5 407.0V597.0M578.5 407.0V597.0M633.5 407.0V597.0M688.5 407.0V597.0M743.5 407.0V597.0" stroke="rgba(240,250,255,0.058)" stroke-width="1" fill="none" shape-rendering="crispEdges"/>
<path d="M450.2 410.5H781.2M450.2 445.5H781.2M450.2 479.5H781.2M450.2 514.5H781.2M450.2 549.5H781.2M450.2 583.5H781.2" stroke="rgba(240,250,255,0.044)" stroke-width="1" fill="none" shape-rendering="crispEdges"/>
<text x="445.2" y="413.9" text-anchor="end" font-size="12" fill="#ccccdc" textLength="24.3" lengthAdjust="spacing">46.2</text>
<text x="445.2" y="448.5" text-anchor="end" font-size="12" fill="#ccccdc" textLength="14.4" lengthAdjust="spacing">46</text>
<text x="445.2" y="483.2" text-anchor="end" font-size="12" fill="#ccccdc" textLength="24.2" lengthAdjust="spacing">45.8</text>
<text x="445.2" y="517.9" text-anchor="end" font-size="12" fill="#ccccdc" textLength="24.3" lengthAdjust="spacing">45.6</text>
<text x="445.2" y="552.5" text-anchor="end" font-size="12" fill="#ccccdc" textLength="24.1" lengthAdjust="spacing">45.4</text>
<text x="445.2" y="587.1" text-anchor="end" font-size="12" fill="#ccccdc" textLength="23.9" lengthAdjust="spacing">45.2</text>
<text x="468.1" y="610.7" text-anchor="middle" font-size="12" fill="#ccccdc" textLength="30.6" lengthAdjust="spacing">13:00</text>
<text x="523.0" y="610.7" text-anchor="middle" font-size="12" fill="#ccccdc" textLength="30.3" lengthAdjust="spacing">14:00</text>
<text x="578.0" y="610.7" text-anchor="middle" font-size="12" fill="#ccccdc" textLength="30.1" lengthAdjust="spacing">15:00</text>
<text x="633.0" y="610.7" text-anchor="middle" font-size="12" fill="#ccccdc" textLength="30.5" lengthAdjust="spacing">16:00</text>
<text x="688.0" y="610.7" text-anchor="middle" font-size="12" fill="#ccccdc" textLength="29.3" lengthAdjust="spacing">17:00</text>
<text x="743.0" y="610.7" text-anchor="middle" font-size="12" fill="#ccccdc" textLength="30.4" lengthAdjust="spacing">18:00</text>
<text x="416.0" y="381.0" text-anchor="start" font-size="14" fill="#ccccdc" textLength="142.0" lengthAdjust="spacing" class="ttl">disk usage total (GB)</text>
<rect x="420" y="630.0" width="14" height="4" rx="2" fill="#8F3BB8"/>
<clipPath id="c407358"><rect x="407" y="613" width="382.0" height="40"/></clipPath>
<text x="442.6" y="636.2" text-anchor="start" font-size="12" fill="#ccccdc" textLength="395.9" lengthAdjust="spacing" clip-path="url(#c407358)">{device=&quot;/dev/disk3s1s1&quot;, fstype=&quot;apfs&quot;, instance=&quot;localhost:9100&quot;}</text>
<path d="M450.60 575.34L451.52 575.40L452.43 575.35L453.35 575.40L454.26 575.40L455.18 575.26L456.09 575.24L457.01 575.43L457.92 575.29L458.84 575.27L459.75 575.45L460.67 575.31L461.58 575.40L462.50 575.30L463.41 575.33L464.33 575.21L465.24 575.32L466.16 575.37L467.07 575.28L467.99 575.32L468.90 575.30L469.82 575.15L470.73 575.31L471.65 575.26L472.56 575.18L473.48 575.11L474.39 575.30L475.31 575.20L476.22 575.25L477.14 575.28L478.05 575.24L478.97 575.28L479.88 575.15L480.80 575.24L481.71 575.14L482.63 575.26L483.54 575.23L484.46 575.04L485.37 575.04L486.29 575.05L487.20 575.23L488.12 575.09L489.03 575.13L489.95 575.05L490.86 575.09L491.78 575.05L492.69 575.04L493.61 575.09L494.52 575.08L495.44 575.15L496.35 575.09L497.27 575.14L498.18 575.11L499.10 575.14L500.01 575.06L500.93 574.93L501.84 575.09L502.76 575.11L503.67 575.08L504.59 575.00L505.50 575.02L506.42 574.90L507.33 575.04L508.25 574.97L509.16 574.89L510.08 574.83L510.99 575.01L511.91 575.04L512.82 574.82L513.74 574.98L514.65 574.88L515.57 574.81L516.48 574.84L517.40 574.94L518.31 574.96L519.23 574.76L520.14 575.39L521.06 575.24L521.97 575.40L522.89 575.30L523.80 575.42L524.72 575.44L525.63 575.32L526.55 575.43L527.46 575.26L528.38 574.69L529.29 574.81L530.21 574.67L531.12 574.70L532.04 574.74L532.95 574.79L533.87 574.67L534.78 574.63L535.70 574.83L536.61 574.69L537.53 574.83L538.44 574.81L539.36 574.68L540.27 574.69L541.19 574.70L542.10 574.72L543.02 574.70L543.93 574.69L544.85 574.69L545.76 574.76L546.68 574.65L547.59 574.63L548.50 574.69L549.42 574.57L550.33 574.58L551.25 574.73L552.16 575.01L553.08 575.01L553.99 574.88L554.91 574.97L555.82 575.00L556.74 574.86L557.65 574.99L558.57 574.59L559.48 574.45L560.40 574.58L561.31 574.53L562.23 574.57L563.14 574.49L564.06 574.57L564.97 574.57L565.89 574.39L566.80 574.39L567.72 574.53L568.63 574.59L569.55 574.41L570.46 574.46L571.38 574.48L572.29 574.41L573.21 574.41L574.12 574.39L575.04 574.40L575.95 574.45L576.87 574.37L577.78 574.38L578.70 574.47L579.50 574.20L580.30 422.50L581.30 563.60L588.00 563.70L595.30 563.80L596.10 565.40L605.00 564.70L614.00 564.20L620.80 563.80L621.50 499.00L622.30 553.10L630.00 552.80L636.00 553.20L645.00 552.30L655.00 551.50L662.60 551.00L664.00 557.40L675.00 556.80L686.80 556.20L688.00 556.50L689.30 558.80L700.00 557.90L715.00 557.60L730.00 557.20L745.00 556.90L752.00 556.30L758.00 556.60L762.00 557.10L770.00 556.60L777.50 556.30L779.30 557.00L780.80 559.60" stroke="#8F3BB8" stroke-width="1.05" fill="none" stroke-linejoin="round"/>
</svg></div>
<div class="panel" style="left:806px;top:358px;width:391px;height:296px">
<svg width="391" height="296" viewBox="806 358 391 296">
<path d="M863.5 407.0V597.0M919.5 407.0V597.0M974.5 407.0V597.0M1030.5 407.0V597.0M1086.5 407.0V597.0M1142.5 407.0V597.0" stroke="rgba(240,250,255,0.058)" stroke-width="1" fill="none" shape-rendering="crispEdges"/>
<path d="M844.7 446.5H1180.2M844.7 494.5H1180.2M844.7 543.5H1180.2M844.7 592.5H1180.2" stroke="rgba(240,250,255,0.044)" stroke-width="1" fill="none" shape-rendering="crispEdges"/>
<text x="839.7" y="449.7" text-anchor="end" font-size="12" fill="#ccccdc" textLength="19.8" lengthAdjust="spacing">150</text>
<text x="839.7" y="498.3" text-anchor="end" font-size="12" fill="#ccccdc" textLength="20.5" lengthAdjust="spacing">100</text>
<text x="839.7" y="546.9" text-anchor="end" font-size="12" fill="#ccccdc" textLength="14.5" lengthAdjust="spacing">50</text>
<text x="839.7" y="595.5" text-anchor="end" font-size="12" fill="#ccccdc" textLength="7.6" lengthAdjust="spacing">0</text>
<text x="862.8" y="610.7" text-anchor="middle" font-size="12" fill="#ccccdc" textLength="30.6" lengthAdjust="spacing">13:00</text>
<text x="918.6" y="610.7" text-anchor="middle" font-size="12" fill="#ccccdc" textLength="30.3" lengthAdjust="spacing">14:00</text>
<text x="974.4" y="610.7" text-anchor="middle" font-size="12" fill="#ccccdc" textLength="30.1" lengthAdjust="spacing">15:00</text>
<text x="1030.2" y="610.7" text-anchor="middle" font-size="12" fill="#ccccdc" textLength="30.5" lengthAdjust="spacing">16:00</text>
<text x="1086.0" y="610.7" text-anchor="middle" font-size="12" fill="#ccccdc" textLength="29.3" lengthAdjust="spacing">17:00</text>
<text x="1141.8" y="610.7" text-anchor="middle" font-size="12" fill="#ccccdc" textLength="30.4" lengthAdjust="spacing">18:00</text>
<text x="815.0" y="381.0" text-anchor="start" font-size="14" fill="#ccccdc" textLength="177.0" lengthAdjust="spacing" class="ttl">network outbound (Mbps)</text>
<rect x="819" y="630.0" width="14" height="4" rx="2" fill="#C4162A"/>
<clipPath id="c806358"><rect x="806" y="613" width="382.0" height="40"/></clipPath>
<text x="841.1" y="636.2" text-anchor="start" font-size="12" fill="#ccccdc" textLength="402.3" lengthAdjust="spacing" clip-path="url(#c806358)">sum(rate(node_network_transmit_bytes_total{device!=&quot;lo0&quot;}[1m])) * 8</text>
<path d="M844.60 592.10L845.53 592.10L846.46 592.10L847.40 592.10L848.33 592.10L849.26 592.10L850.19 592.10L851.12 592.10L852.06 592.10L852.99 592.10L853.92 592.10L854.85 592.10L855.78 592.10L856.72 592.10L857.65 592.10L858.58 592.10L859.51 592.10L860.44 592.10L861.38 592.10L862.31 592.10L863.24 592.10L864.17 592.10L865.10 592.10L866.04 592.10L866.97 592.10L867.90 592.10L868.83 592.10L869.76 592.10L870.70 592.10L871.63 592.10L872.56 592.10L873.49 592.10L874.42 592.10L875.36 592.10L876.29 592.10L877.22 592.10L878.15 592.10L879.08 592.10L880.02 592.10L880.95 592.10L881.88 592.10L882.81 592.10L883.74 592.10L884.68 592.10L885.61 592.10L886.54 592.10L887.47 592.10L888.40 592.10L889.34 592.10L890.27 592.10L891.20 592.10L892.13 592.10L893.06 592.10L894.00 592.10L894.93 592.10L895.86 592.10L896.79 592.10L897.72 592.10L898.66 592.10L899.59 592.10L900.52 592.10L901.45 592.10L902.38 592.10L903.32 592.10L904.25 592.10L905.18 592.10L906.11 592.10L907.04 592.10L907.98 592.10L908.91 592.10L909.84 592.10L910.77 592.10L911.70 592.10L912.64 592.10L913.57 592.10L914.50 592.10L915.43 592.10L916.36 592.10L917.30 592.10L918.23 592.10L919.16 592.10L920.09 592.10L921.02 592.10L921.96 592.10L922.89 592.10L923.82 592.10L924.75 592.10L925.68 592.10L926.62 592.10L927.55 592.10L928.48 592.10L929.41 592.10L930.34 592.10L931.28 592.10L932.21 592.10L933.14 592.10L934.07 592.10L935.00 592.10L935.94 592.10L936.87 592.10L937.80 592.10L938.73 592.10L939.66 592.10L940.60 592.10L941.53 592.10L942.46 592.10L943.39 592.10L944.32 592.10L945.26 592.10L946.19 592.10L947.12 592.10L948.05 592.10L948.98 592.10L949.92 592.10L950.85 592.10L951.78 592.10L952.71 592.10L953.64 592.10L954.58 592.10L955.51 592.10L956.44 590.35L957.37 590.22L958.30 589.89L959.24 590.91L960.17 589.71L961.10 589.00L962.03 590.96L962.96 589.81L963.90 590.48L964.83 590.56L965.76 589.76L966.69 590.23L967.62 590.68L968.56 590.33L969.49 590.72L970.42 589.92L971.35 590.03L972.28 589.86L973.22 590.41L974.15 590.99L975.08 590.53L976.01 590.78L976.94 590.24L977.88 590.74L978.81 589.84L979.74 590.11L980.67 590.64L981.60 590.72L982.54 590.29L983.47 589.82L984.40 590.07L985.33 589.99L986.26 590.09L987.20 590.83L988.13 589.98L989.06 590.94L989.99 590.93L990.92 589.78L991.86 590.23L992.79 590.39L993.72 589.73L994.65 590.29L995.58 590.97L996.52 589.86L997.45 590.54L998.38 589.87L999.31 590.51L1000.24 590.95L1001.18 589.98L1002.11 589.71L1003.04 589.82L1003.97 590.46L1004.90 589.72L1005.84 589.82L1006.77 590.40L1007.70 590.99L1008.63 590.29L1009.56 590.26L1010.50 590.59L1011.43 589.83L1012.36 590.51L1013.29 589.94L1014.22 590.55L1015.16 591.04L1016.09 589.78L1017.02 590.48L1017.95 590.55L1018.88 589.91L1019.82 590.08L1020.75 591.09L1021.68 591.10L1022.61 589.87L1023.54 590.69L1024.48 591.03L1025.30 590.20L1027.30 425.60L1029.20 591.90L1030.13 591.70L1031.06 591.70L1032.00 591.70L1032.93 591.70L1033.86 591.70L1034.79 591.70L1035.72 591.70L1036.66 591.70L1037.59 591.70L1038.52 591.70L1039.45 591.70L1040.38 591.70L1041.32 591.70L1042.25 591.70L1043.18 591.70L1044.11 591.70L1045.04 591.70L1045.98 591.70L1046.91 591.70L1047.84 591.70L1048.77 591.70L1049.70 591.70L1050.64 591.70L1051.57 591.70L1052.50 591.70L1053.43 591.70L1054.36 591.70L1055.30 591.70L1056.23 591.70L1057.16 591.70L1058.09 591.70L1059.02 591.70L1059.96 591.70L1060.89 591.70L1061.82 591.70L1062.75 591.70L1063.68 591.70L1064.62 591.70L1065.55 591.70L1066.48 591.70L1067.41 591.70L1068.34 591.70L1069.28 591.70L1070.21 591.70L1071.14 591.70L1072.07 591.70L1073.00 591.70L1073.94 591.70L1074.87 591.70L1075.80 591.70L1076.73 591.70L1077.66 591.70L1078.60 591.70L1079.53 591.70L1080.46 591.70L1081.39 591.70L1082.32 591.70L1083.26 591.70L1084.19 591.70L1085.12 591.70L1086.05 591.70L1086.98 591.70L1087.92 591.70L1088.85 591.70L1089.78 591.70L1090.71 591.70L1091.64 591.70L1092.58 591.70L1093.51 591.70L1094.44 591.70L1095.37 591.70L1096.30 591.70L1097.24 591.70L1098.17 591.70L1099.10 591.70L1100.03 592.20L1100.96 592.20L1101.90 592.20L1102.83 592.20L1103.76 592.20L1104.69 592.20L1105.62 592.20L1106.56 592.20L1107.49 592.20L1108.42 592.20L1109.35 592.20L1110.28 592.20L1111.22 592.20L1112.15 592.20L1113.08 592.20L1114.01 592.20L1114.94 592.20L1115.88 592.20L1116.81 592.20L1117.74 592.20L1118.67 592.20L1119.60 592.20L1120.54 592.20L1121.47 592.20L1122.40 592.20L1123.33 592.20L1124.26 592.20L1125.20 592.20L1126.13 592.20L1127.06 592.20L1127.99 592.20L1128.92 592.20L1129.86 592.20L1130.79 592.20L1131.72 592.20L1132.65 592.20L1133.58 592.20L1134.52 592.20L1135.45 592.20L1136.38 592.20L1137.31 592.20L1138.24 592.20L1139.18 592.20L1140.11 592.20L1141.04 592.20L1141.97 592.20L1142.90 592.20L1143.84 592.20L1144.77 590.74L1145.70 591.11L1146.63 590.54L1147.56 590.87L1148.50 591.17L1149.43 591.09L1150.36 591.27L1151.29 590.59L1152.22 590.85L1153.16 591.36L1154.09 591.08L1155.02 590.95L1155.95 590.90L1156.88 591.49L1157.82 591.07L1158.75 590.52L1159.68 591.30L1160.61 590.83L1161.54 590.93L1162.48 590.71L1163.41 590.94L1164.34 590.82L1165.27 590.59L1166.20 591.13L1167.14 590.60L1168.07 591.28L1169.00 590.53L1169.93 591.28L1170.86 591.31L1171.80 591.00L1172.73 591.21L1173.66 590.75L1174.59 591.24L1175.52 590.93L1176.46 590.73L1177.39 591.46L1178.32 590.90L1179.25 590.87" stroke="#C4162A" stroke-width="1.05" fill="none" stroke-linejoin="round"/>
</svg></div>
<div class="panel" style="left:1205px;top:358px;width:391px;height:296px">
<svg width="391" height="296" viewBox="1205 358 391 296">
<path d="M1260.5 407.0V597.0M1316.5 407.0V597.0M1372.5 407.0V597.0M1428.5 407.0V597.0M1484.5 407.0V597.0M1541.5 407.0V597.0" stroke="rgba(240,250,255,0.058)" stroke-width="1" fill="none" shape-rendering="crispEdges"/>
<path d="M1241.9 407.5H1579.5M1241.9 438.5H1579.5M1241.9 468.5H1579.5M1241.9 499.5H1579.5M1241.9 530.5H1579.5M1241.9 561.5H1579.5M1241.9 592.5H1579.5" stroke="rgba(240,250,255,0.044)" stroke-width="1" fill="none" shape-rendering="crispEdges"/>
<text x="1236.9" y="410.9" text-anchor="end" font-size="12" fill="#ccccdc" textLength="15.2" lengthAdjust="spacing">1.2</text>
<text x="1236.9" y="441.7" text-anchor="end" font-size="12" fill="#ccccdc" textLength="5.3" lengthAdjust="spacing">1</text>
<text x="1236.9" y="472.4" text-anchor="end" font-size="12" fill="#ccccdc" textLength="17.8" lengthAdjust="spacing">0.8</text>
<text x="1236.9" y="503.2" text-anchor="end" font-size="12" fill="#ccccdc" textLength="17.9" lengthAdjust="spacing">0.6</text>
<text x="1236.9" y="534.0" text-anchor="end" font-size="12" fill="#ccccdc" textLength="17.7" lengthAdjust="spacing">0.4</text>
<text x="1236.9" y="564.7" text-anchor="end" font-size="12" fill="#ccccdc" textLength="17.5" lengthAdjust="spacing">0.2</text>
<text x="1236.9" y="595.5" text-anchor="end" font-size="12" fill="#ccccdc" textLength="7.6" lengthAdjust="spacing">0</text>
<text x="1260.1" y="610.7" text-anchor="middle" font-size="12" fill="#ccccdc" textLength="30.6" lengthAdjust="spacing">13:00</text>
<text x="1316.2" y="610.7" text-anchor="middle" font-size="12" fill="#ccccdc" textLength="30.3" lengthAdjust="spacing">14:00</text>
<text x="1372.3" y="610.7" text-anchor="middle" font-size="12" fill="#ccccdc" textLength="30.1" lengthAdjust="spacing">15:00</text>
<text x="1428.4" y="610.7" text-anchor="middle" font-size="12" fill="#ccccdc" textLength="30.5" lengthAdjust="spacing">16:00</text>
<text x="1484.5" y="610.7" text-anchor="middle" font-size="12" fill="#ccccdc" textLength="29.3" lengthAdjust="spacing">17:00</text>
<text x="1540.6" y="610.7" text-anchor="middle" font-size="12" fill="#ccccdc" textLength="30.4" lengthAdjust="spacing">18:00</text>
<text x="1214.0" y="381.0" text-anchor="start" font-size="14" fill="#ccccdc" textLength="167.0" lengthAdjust="spacing" class="ttl">network inbound (Mbps)</text>
<rect x="1218" y="630.0" width="14" height="4" rx="2" fill="#FFA6B0"/>
<clipPath id="c1205358"><rect x="1205" y="613" width="381.9000000000001" height="40"/></clipPath>
<text x="1240.1" y="636.2" text-anchor="start" font-size="12" fill="#ccccdc" textLength="399.7" lengthAdjust="spacing" clip-path="url(#c1205358)">sum(rate(node_network_receive_bytes_total{device!=&quot;lo0&quot;}[1m])) * 8</text>
<path d="M1242.00 590.92L1242.93 590.82L1243.87 591.03L1244.80 590.86L1245.73 590.80L1246.66 591.03L1247.60 591.39L1248.53 591.31L1249.46 591.29L1250.40 590.91L1251.33 591.13L1252.26 590.94L1253.20 590.87L1254.13 590.82L1255.06 590.90L1255.99 591.40L1256.93 591.33L1257.86 591.31L1258.79 591.31L1259.73 590.89L1260.66 590.97L1261.59 591.19L1262.53 591.26L1263.46 591.35L1264.39 590.00L1265.32 590.81L1266.26 591.17L1267.19 591.22L1268.12 591.10L1269.06 590.87L1269.99 591.08L1270.92 590.81L1271.86 591.40L1272.79 591.36L1273.72 591.13L1274.65 590.96L1275.59 591.39L1276.52 591.15L1277.45 591.37L1278.39 591.34L1279.32 591.11L1280.25 591.04L1281.19 591.17L1282.12 591.05L1283.05 590.86L1283.98 590.96L1284.92 591.32L1285.85 590.78L1286.78 590.78L1287.72 591.19L1288.65 590.95L1289.58 591.12L1290.52 591.08L1291.45 590.99L1292.38 591.45L1293.31 590.89L1294.25 591.04L1295.18 590.89L1296.11 591.19L1297.05 590.94L1297.98 591.00L1298.91 591.27L1299.85 590.97L1300.78 591.14L1301.71 591.38L1302.64 590.82L1303.58 590.79L1304.51 590.91L1305.44 591.29L1306.38 591.18L1307.31 590.92L1308.24 590.98L1309.18 590.87L1310.11 591.07L1311.04 590.78L1311.97 591.24L1312.91 591.38L1313.84 591.42L1314.77 591.26L1315.71 591.42L1316.64 590.76L1317.57 590.95L1318.51 591.43L1319.44 591.29L1320.37 591.04L1321.30 591.41L1322.24 591.18L1323.17 591.32L1324.10 590.96L1325.04 590.88L1325.97 591.06L1326.90 590.85L1327.84 591.02L1328.77 591.42L1329.70 590.98L1330.63 590.76L1331.57 590.78L1332.50 590.87L1333.43 591.30L1334.37 591.00L1335.00 591.09L1338.12 591.40L1341.23 590.62L1344.35 591.40L1347.46 590.62L1350.58 591.71L1352.91 591.40L1354.47 589.84L1356.03 584.39L1357.59 582.83L1358.68 579.72L1359.92 584.39L1361.48 583.61L1363.04 582.06L1364.60 583.30L1366.15 582.37L1367.71 583.61L1368.96 582.83L1370.51 579.72L1371.60 582.06L1372.85 579.72L1374.25 581.28L1375.81 582.06L1377.06 578.94L1378.61 577.38L1379.86 575.83L1380.95 570.37L1382.20 571.93L1383.60 575.05L1384.53 577.38L1385.62 579.72L1386.71 578.16L1387.96 583.61L1389.52 573.49L1390.30 578.16L1391.39 570.37L1392.63 576.60L1393.88 569.60L1394.97 575.05L1396.06 570.37L1397.31 575.05L1398.40 569.60L1399.64 577.38L1401.20 581.74L1402.76 578.94L1403.85 576.60L1405.09 579.72L1406.65 578.16L1407.90 577.38L1408.99 575.05L1410.08 578.94L1411.32 575.05L1412.41 576.60L1413.66 573.02L1414.75 576.60L1416.00 578.16L1417.24 574.27L1418.33 575.05L1419.42 577.38L1420.67 574.58L1421.92 576.60L1423.01 575.05L1423.79 578.16L1423.90 578.00L1425.50 423.90L1427.30 583.00L1428.46 582.37L1429.39 583.30L1430.33 585.17L1431.42 585.01L1432.51 585.55L1433.60 583.85L1434.69 585.17L1435.73 584.77L1436.77 585.21L1437.80 585.02L1438.84 584.68L1439.88 584.87L1440.92 584.80L1441.96 585.33L1443.00 585.53L1444.03 585.17L1445.01 584.93L1445.98 584.73L1446.95 584.86L1447.93 585.27L1448.90 584.61L1449.88 584.74L1450.85 584.69L1451.82 584.86L1452.80 583.49L1453.77 585.19L1454.74 585.24L1455.72 585.17L1456.69 585.09L1457.66 584.86L1458.64 584.63L1459.61 584.86L1460.86 583.30L1461.95 585.17L1462.90 585.40L1463.85 584.87L1464.80 585.14L1465.75 585.07L1466.71 584.86L1467.66 584.47L1468.61 583.83L1469.56 584.85L1470.51 584.39L1472.07 585.17L1473.05 584.11L1474.02 585.29L1474.99 585.24L1475.97 584.44L1476.94 584.79L1477.91 584.78L1478.89 583.18L1479.86 584.39L1480.79 583.79L1481.73 585.00L1482.66 585.10L1483.60 585.31L1484.53 585.17L1485.57 585.41L1486.61 585.20L1487.65 585.32L1488.69 584.94L1489.72 583.45L1490.76 584.86L1491.80 585.04L1492.84 585.35L1493.88 585.17L1494.81 584.73L1495.75 585.07L1496.68 584.32L1497.62 584.80L1498.55 584.39L1499.80 585.95L1500.89 588.29L1501.98 588.32L1503.07 588.51L1504.16 588.08L1505.25 588.65L1506.34 588.29L1507.33 587.96L1508.32 588.53L1509.31 588.15L1510.30 587.30L1511.30 588.44L1512.29 587.96L1513.28 588.03L1514.27 587.80L1515.26 587.78L1516.25 588.00L1517.24 587.98L1518.02 587.04L1518.80 588.29L1519.77 588.28L1520.75 587.28L1521.72 588.02L1522.69 588.12L1523.67 586.99L1524.64 587.85L1525.62 587.90L1526.59 587.98L1527.52 588.38L1528.46 588.18L1529.39 587.92L1530.33 588.07L1531.26 587.98L1532.20 588.39L1533.13 588.15L1534.07 588.44L1535.00 588.38L1535.93 588.29L1536.91 587.92L1537.88 588.45L1538.86 588.48L1539.83 588.19L1540.80 588.19L1541.78 587.98L1542.75 587.76L1543.72 587.98L1545.28 585.17L1546.84 588.29L1548.40 583.61L1549.95 582.06L1551.12 582.08L1552.29 582.37L1553.85 585.17L1554.94 583.61L1555.87 585.95L1557.74 582.83L1559.30 585.17L1560.86 582.83L1562.41 583.61L1563.66 580.50L1565.22 581.74L1567.09 580.19L1568.64 578.94L1570.20 580.81L1571.76 580.19L1573.32 582.06L1574.88 580.50L1576.43 580.81L1577.68 578.63L1578.77 581.28" stroke="#FFA6B0" stroke-width="1.05" fill="none" stroke-linejoin="round"/>
</svg></div>
</body></html>
